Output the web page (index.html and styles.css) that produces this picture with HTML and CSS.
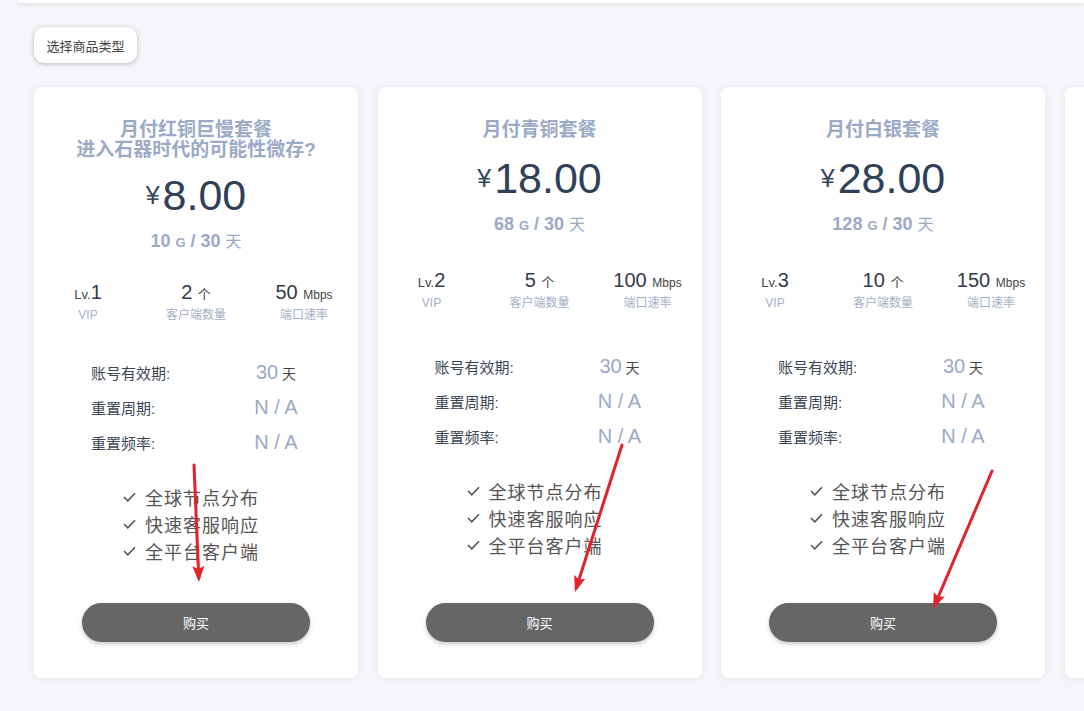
FILE: index.html
```html
<!DOCTYPE html>
<html lang="zh-CN">
<head>
<meta charset="utf-8">
<title>选择商品类型</title>
<link rel="stylesheet" href="styles.css">
</head>
<body>
<div class="topbar"></div>
<main class="page">
  <button class="type-btn">选择商品类型</button>
  <div class="cards">
    <section class="card">
      <div class="title">月付红铜巨慢套餐<br>进入石器时代的可能性微存?</div>
      <div class="price"><span class="cur">¥</span><span class="num">8.00</span></div>
      <div class="quota"><b>10</b> <small>G</small> <b>/ 30</b> <span>天</span></div>
      <div class="stats">
        <div class="stat"><div class="val"><span class="lv">Lv.</span>1</div><div class="lbl">VIP</div></div>
        <div class="stat"><div class="val">2 <span class="u">个</span></div><div class="lbl">客户端数量</div></div>
        <div class="stat"><div class="val">50 <span class="u mb">Mbps</span></div><div class="lbl">端口速率</div></div>
      </div>
      <div class="details">
        <div class="row"><span class="k">账号有效期:</span><span class="v"><em>30</em> 天</span></div>
        <div class="row"><span class="k">重置周期:</span><span class="v"><em>N / A</em></span></div>
        <div class="row"><span class="k">重置频率:</span><span class="v"><em>N / A</em></span></div>
      </div>
      <div class="features">
        <ul>
          <li><svg class="chk" viewBox="0 0 13 10"><polyline points="1,5 4.8,8.8 12,1.2"/></svg>全球节点分布</li>
          <li><svg class="chk" viewBox="0 0 13 10"><polyline points="1,5 4.8,8.8 12,1.2"/></svg>快速客服响应</li>
          <li><svg class="chk" viewBox="0 0 13 10"><polyline points="1,5 4.8,8.8 12,1.2"/></svg>全平台客户端</li>
        </ul>
      </div>
      <div class="buy-wrap"><button class="buy">购买</button></div>
    </section>

    <section class="card">
      <div class="title">月付青铜套餐</div>
      <div class="price"><span class="cur">¥</span><span class="num">18.00</span></div>
      <div class="quota"><b>68</b> <small>G</small> <b>/ 30</b> <span>天</span></div>
      <div class="stats">
        <div class="stat"><div class="val"><span class="lv">Lv.</span>2</div><div class="lbl">VIP</div></div>
        <div class="stat"><div class="val">5 <span class="u">个</span></div><div class="lbl">客户端数量</div></div>
        <div class="stat"><div class="val">100 <span class="u mb">Mbps</span></div><div class="lbl">端口速率</div></div>
      </div>
      <div class="details">
        <div class="row"><span class="k">账号有效期:</span><span class="v"><em>30</em> 天</span></div>
        <div class="row"><span class="k">重置周期:</span><span class="v"><em>N / A</em></span></div>
        <div class="row"><span class="k">重置频率:</span><span class="v"><em>N / A</em></span></div>
      </div>
      <div class="features">
        <ul>
          <li><svg class="chk" viewBox="0 0 13 10"><polyline points="1,5 4.8,8.8 12,1.2"/></svg>全球节点分布</li>
          <li><svg class="chk" viewBox="0 0 13 10"><polyline points="1,5 4.8,8.8 12,1.2"/></svg>快速客服响应</li>
          <li><svg class="chk" viewBox="0 0 13 10"><polyline points="1,5 4.8,8.8 12,1.2"/></svg>全平台客户端</li>
        </ul>
      </div>
      <div class="buy-wrap"><button class="buy">购买</button></div>
    </section>

    <section class="card">
      <div class="title">月付白银套餐</div>
      <div class="price"><span class="cur">¥</span><span class="num">28.00</span></div>
      <div class="quota"><b>128</b> <small>G</small> <b>/ 30</b> <span>天</span></div>
      <div class="stats">
        <div class="stat"><div class="val"><span class="lv">Lv.</span>3</div><div class="lbl">VIP</div></div>
        <div class="stat"><div class="val">10 <span class="u">个</span></div><div class="lbl">客户端数量</div></div>
        <div class="stat"><div class="val">150 <span class="u mb">Mbps</span></div><div class="lbl">端口速率</div></div>
      </div>
      <div class="details">
        <div class="row"><span class="k">账号有效期:</span><span class="v"><em>30</em> 天</span></div>
        <div class="row"><span class="k">重置周期:</span><span class="v"><em>N / A</em></span></div>
        <div class="row"><span class="k">重置频率:</span><span class="v"><em>N / A</em></span></div>
      </div>
      <div class="features">
        <ul>
          <li><svg class="chk" viewBox="0 0 13 10"><polyline points="1,5 4.8,8.8 12,1.2"/></svg>全球节点分布</li>
          <li><svg class="chk" viewBox="0 0 13 10"><polyline points="1,5 4.8,8.8 12,1.2"/></svg>快速客服响应</li>
          <li><svg class="chk" viewBox="0 0 13 10"><polyline points="1,5 4.8,8.8 12,1.2"/></svg>全平台客户端</li>
        </ul>
      </div>
      <div class="buy-wrap"><button class="buy">购买</button></div>
    </section>

    <section class="card card-more"></section>
  </div>
</main>

<svg class="annot" width="1084" height="711" viewBox="0 0 1084 711">
  <defs>
    <marker id="ah" markerUnits="userSpaceOnUse" markerWidth="16" markerHeight="12" refX="12" refY="6" orient="auto">
      <path d="M0,0 L16,6 L0,12 L3,6 z" fill="#e3232c"/>
    </marker>
  </defs>
  <line x1="194" y1="465" x2="198.8" y2="578" marker-end="url(#ah)"/>
  <line x1="622" y1="445" x2="576.2" y2="588.2" marker-end="url(#ah)"/>
  <line x1="992" y1="471" x2="934.6" y2="605.3" marker-end="url(#ah)"/>
</svg>
</body>
</html>
```

FILE: styles.css
```css
* { box-sizing: border-box; }

html, body {
  margin: 0;
  padding: 0;
  height: 711px;
  overflow: hidden;
  background: #f5f6fa;
  font-family: "Liberation Sans", "Noto Sans CJK SC", sans-serif;
  color: #333;
}

.topbar {
  height: 3px;
  margin-left: 17px;
  background: #fff;
  border-radius: 0 0 0 6px;
  box-shadow: 0 1px 4px rgba(0, 0, 0, 0.12);
}

.page {
  padding-left: 34px;
  display: flex;
  flex-direction: column;
  align-items: flex-start;
}

.type-btn {
  margin-top: 24px;
  width: 103px;
  height: 36px;
  padding: 0;
  border: none;
  border-radius: 10px;
  background: #fff;
  color: #444;
  font-family: "Liberation Sans", "Noto Sans CJK SC", sans-serif;
  font-size: 13px;
  box-shadow: 0 1px 5px rgba(0, 0, 0, 0.25);
}

.cards {
  margin-top: 24px;
  display: flex;
  gap: 19.5px;
}

.card {
  flex: none;
  width: 324px;
  height: 591px;
  background: #fff;
  border-radius: 8px;
  box-shadow: 0 0 10px rgba(30, 40, 80, 0.07);
  padding: 33px 0 36px;
  display: flex;
  flex-direction: column;
  text-align: center;
}

.title {
  flex: none;
  font-size: 19px;
  line-height: 20px;
  font-weight: bold;
  color: #9aaac7;
}

.price, .quota, .stats, .details, .features, .buy-wrap {
  display: flex;
  flex-direction: column;
  justify-content: flex-end;
}

.price { flex: 0 0.95 63px; }
.quota { flex: 0 0.6 33px; }
.stats { flex: 0 1.3 76px; }
.details { flex: 0 0.85 141px; }
.features { flex: 0 0 105px; }
.buy-wrap { flex: 0 1.4 84px; align-items: center; }

.price {
  flex-direction: row;
  align-items: flex-end;
  justify-content: center;
}
.price .cur, .price .num { line-height: 50px; }
.price .cur {
  font-size: 25px;
  color: #34465c;
  margin-right: 3px;
}
.price .num {
  font-size: 43px;
  color: #2f4158;
}

.quota {
  display: block;
  padding-top: 9px;
  line-height: 24px;
  color: #9aaac7;
  font-size: 18px;
}
.quota b { font-weight: bold; }
.quota small { font-size: 13px; font-weight: bold; }
.quota span { font-size: 16px; }

.stats {
  display: grid;
  grid-template-columns: repeat(3, 1fr);
  align-content: end;
}
.stat .val {
  line-height: 20px;
  font-size: 20px;
  color: #333c48;
}
.stat .lv { font-size: 13px; color: #444; }
.stat .u { font-size: 13px; color: #444; }
.stat .u.mb { font-size: 12px; }
.stat .lbl {
  line-height: 20px;
  font-size: 12px;
  color: #a3b0c9;
}

.row {
  display: grid;
  grid-template-columns: 154px 62px;
  padding-left: 57px;
  height: 35px;
  align-items: center;
  text-align: left;
}
.row .k {
  font-size: 15px;
  color: #3c4756;
}
.row .v {
  text-align: center;
  font-size: 14px;
  color: #444;
}
.row .v em {
  font-style: normal;
  font-size: 20px;
  color: #9aaac7;
}

.features {
  align-items: center;
  padding-right: 10px;
}
.features ul {
  list-style: none;
  margin: 0;
  padding: 0;
  text-align: left;
}
.features li {
  display: flex;
  align-items: center;
  height: 27px;
  font-size: 18px;
  letter-spacing: 1px;
  color: #555;
}
.chk {
  width: 13px;
  height: 10px;
  margin-right: 9px;
  fill: none;
  stroke: #555;
  stroke-width: 1.6;
}

.buy {
  width: 228px;
  height: 39px;
  border: none;
  border-radius: 20px;
  background: #666;
  color: #fff;
  font-family: "Liberation Sans", "Noto Sans CJK SC", sans-serif;
  font-size: 13px;
  box-shadow: 0 2px 4px rgba(0, 0, 0, 0.22);
}

.annot {
  position: fixed;
  left: 0;
  top: 0;
  pointer-events: none;
}
.annot line {
  stroke: #e3232c;
  stroke-width: 3;
  stroke-linecap: round;
}
```
